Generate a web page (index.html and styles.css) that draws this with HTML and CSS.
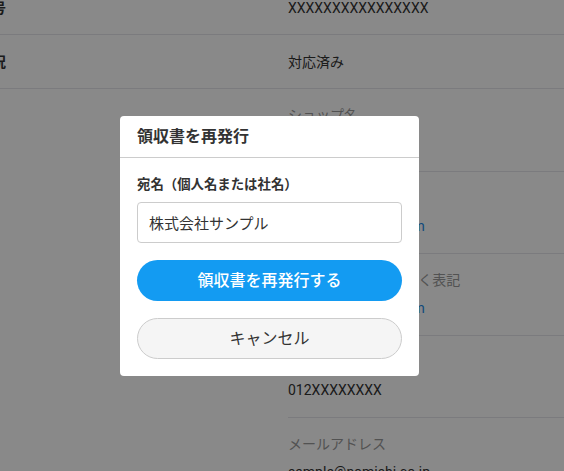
FILE: index.html
```html
<!DOCTYPE html>
<html lang="ja">
<head>
<meta charset="utf-8">
<title>領収書を再発行</title>
<link rel="stylesheet" href="styles.css">
</head>
<body>
<main class="page">
  <div class="row-h">
    <div class="h-label">注文番号</div>
    <div class="h-value">XXXXXXXXXXXXXXXX</div>
  </div>
  <div class="row-h">
    <div class="h-label">対応状況</div>
    <div class="h-value">対応済み</div>
  </div>
  <div class="stack">
    <div class="row-v">
      <div class="v-label">ショップ名</div>
      <div class="v-value">サンプルショップ</div>
    </div>
    <div class="row-v">
      <div class="v-label">ショップURL</div>
      <div class="v-value link">https://examples.com</div>
    </div>
    <div class="row-v">
      <div class="v-label">ショップ URL を正しく表記</div>
      <div class="v-value link">https://examples.com</div>
    </div>
    <div class="row-v">
      <div class="v-label">電話番号</div>
      <div class="v-value">012XXXXXXXX</div>
    </div>
    <div class="row-v">
      <div class="v-label">メールアドレス</div>
      <div class="v-value">sample@nomishi.co.jp</div>
    </div>
  </div>
</main>

<div class="overlay">
  <section class="modal">
    <header class="modal-head">
      <h2 class="modal-title">領収書を再発行</h2>
    </header>
    <div class="modal-body">
      <label class="field-label" for="atena">宛名（個人名または社名）</label>
      <input class="field-input" id="atena" type="text" value="株式会社サンプル">
      <button class="btn btn-primary" type="button">領収書を再発行する</button>
      <button class="btn btn-cancel" type="button">キャンセル</button>
    </div>
  </section>
</div>
</body>
</html>
```

FILE: styles.css
```css
* { box-sizing: border-box; }

html, body {
  margin: 0;
  padding: 0;
  background: #ffffff;
  overflow: hidden;
}

body {
  font-family: Roboto, "Noto Sans CJK JP", sans-serif;
  font-size: 14px;
  color: #333333;
}

.page {
  margin-left: -50px;
  margin-top: -19px;
}

.row-h {
  display: grid;
  grid-template-columns: 338px 1fr;
  align-items: center;
  height: 54px;
  border-bottom: 1px solid #e6e6eb;
}

.h-label {
  font-weight: 700;
  line-height: 20px;
}

.h-value {
  line-height: 20px;
}

.stack {
  margin-left: 338px;
}

.row-v {
  display: flex;
  flex-direction: column;
  gap: 8px;
  height: 82px;
  padding-top: 16px;
  border-bottom: 1px solid #e6e6eb;
}

.row-v:first-child { height: 83px; }

.v-label {
  color: #999999;
  line-height: 20px;
  white-space: nowrap;
}

.v-value {
  line-height: 20px;
  white-space: nowrap;
}

.link { color: #1d8ae6; }

.overlay {
  position: fixed;
  inset: 0;
  background: rgba(0, 0, 0, 0.463);
  display: flex;
  align-items: flex-start;
  padding: 116px 0 0 120px;
}

.modal {
  width: 299px;
  background: #ffffff;
  border-radius: 4px;
}

.modal-head {
  height: 42px;
  display: flex;
  align-items: center;
  padding: 0 17px;
  border-bottom: 1px solid #cccccc;
}

.modal-title {
  margin: 0;
  font-size: 16px;
  font-weight: 700;
  color: #333333;
  line-height: 22px;
}

.modal-body {
  display: flex;
  flex-direction: column;
  padding: 17px 17px 17px;
}

.field-label {
  font-size: 13.4px;
  font-weight: 700;
  line-height: 20px;
  color: #333333;
  margin-bottom: 7px;
}

.field-input {
  height: 41px;
  border: 1px solid #cccccc;
  border-radius: 4px;
  padding: 0 11px;
  font-family: Roboto, "Noto Sans CJK JP", sans-serif;
  font-size: 15px;
  color: #333333;
  margin: 0 0 17px;
  outline: none;
}

.btn {
  height: 41px;
  border-radius: 999px;
  font-family: Roboto, "Noto Sans CJK JP", sans-serif;
  font-size: 16px;
  line-height: 20px;
  cursor: pointer;
  padding: 0;
}

.btn-primary {
  background: #139bf2;
  border: none;
  color: #ffffff;
  font-weight: 500;
  margin-bottom: 17px;
}

.btn-cancel {
  background: #f5f5f5;
  border: 1px solid #cccccc;
  color: #333333;
}
```
